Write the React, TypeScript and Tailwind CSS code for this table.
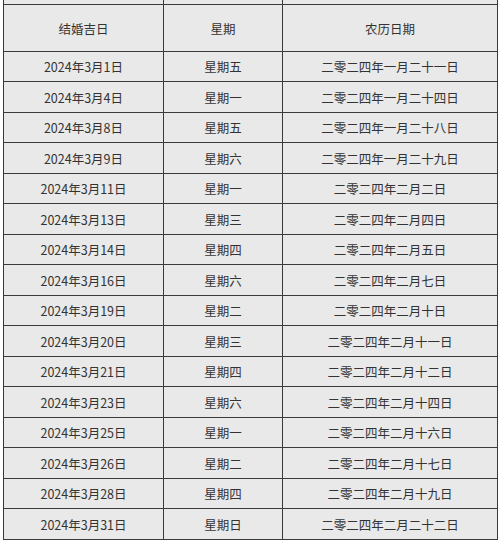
const rows: [string, string, string][] = [
  ['2024年3月1日', '星期五', '二零二四年一月二十一日'],
  ['2024年3月4日', '星期一', '二零二四年一月二十四日'],
  ['2024年3月8日', '星期五', '二零二四年一月二十八日'],
  ['2024年3月9日', '星期六', '二零二四年一月二十九日'],
  ['2024年3月11日', '星期一', '二零二四年二月二日'],
  ['2024年3月13日', '星期三', '二零二四年二月四日'],
  ['2024年3月14日', '星期四', '二零二四年二月五日'],
  ['2024年3月16日', '星期六', '二零二四年二月七日'],
  ['2024年3月19日', '星期二', '二零二四年二月十日'],
  ['2024年3月20日', '星期三', '二零二四年二月十一日'],
  ['2024年3月21日', '星期四', '二零二四年二月十二日'],
  ['2024年3月23日', '星期六', '二零二四年二月十四日'],
  ['2024年3月25日', '星期一', '二零二四年二月十六日'],
  ['2024年3月26日', '星期二', '二零二四年二月十七日'],
  ['2024年3月28日', '星期四', '二零二四年二月十九日'],
  ['2024年3月31日', '星期日', '二零二四年二月二十二日'],
];

function Row({ cells, height }: { cells: string[]; height: string }) {
  return (
    <div className={`flex border-b border-[#3a3a3a] ${height}`}>
      <div className="w-[160px] shrink-0 border-r border-[#3a3a3a] flex items-center justify-center pt-[2px]">{cells[0]}</div>
      <div className="w-[119px] shrink-0 border-r border-[#3a3a3a] flex items-center justify-center pt-[2px]">{cells[1]}</div>
      <div className="w-[215px] shrink-0 border-r border-[#3a3a3a] flex items-center justify-center pt-[2px]">{cells[2]}</div>
    </div>
  );
}

export default function App() {
  return (
    <div className="w-[500px] h-[540px] overflow-hidden bg-white">
      <div
        className="ml-[3px] w-[495px] border-l border-[#3a3a3a] bg-[#e9e9e9] text-[12.5px] text-[#333] leading-none"
        style={{ fontFamily: '"Noto Sans CJK SC", "Noto Sans", sans-serif' }}
      >
        <Row cells={['', '', '']} height="h-[5px]" />
        <Row cells={['结婚吉日', '星期', '农历日期']} height="h-[47px]" />
        {rows.map((r, i) => (
          <Row key={i} cells={r} height={i % 2 ? 'h-[31px]' : 'h-[30px]'} />
        ))}
      </div>
    </div>
  );
}
